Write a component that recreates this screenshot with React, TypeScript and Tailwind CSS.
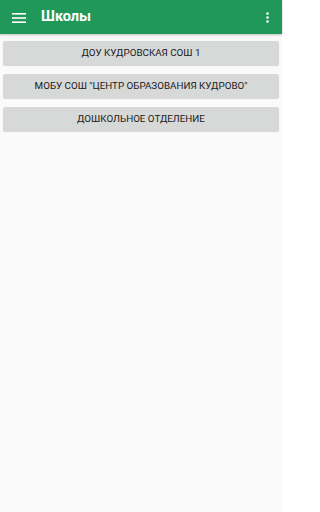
import { useState } from "react";

const schools = [
  "ДОУ Кудровская СОШ 1",
  'МОБУ СОШ "Центр образования Кудрово"',
  "Дошкольное отделение",
];

export default function App() {
  const [selected, setSelected] = useState<number | null>(null);

  return (
    <div className="flex min-h-[512px] w-[282px] flex-col bg-[#fafafa] font-['Roboto',sans-serif]">
      <header className="flex h-[34px] items-center bg-[#20985a] pl-3 pr-[13px] text-white shadow-[0_1px_2px_rgba(0,0,0,0.25)]">
        <svg width="14" height="10" viewBox="0 0 14 10" className="mt-px">
          <rect x="0" y="0" width="14" height="1.6" fill="white" />
          <rect x="0" y="4.2" width="14" height="1.6" fill="white" />
          <rect x="0" y="8.4" width="14" height="1.6" fill="white" />
        </svg>
        <h1 className="ml-[15px] text-[14.5px] font-bold leading-none">Школы</h1>
        <div className="flex-1" />
        <svg width="3" height="11" viewBox="0 0 3 11">
          <circle cx="1.5" cy="1.5" r="1.3" fill="white" />
          <circle cx="1.5" cy="5.5" r="1.3" fill="white" />
          <circle cx="1.5" cy="9.5" r="1.3" fill="white" />
        </svg>
      </header>

      <div className="flex flex-col gap-[9px] px-[3px] pt-[7px]">
        {schools.map((name, i) => (
          <button
            key={name}
            onClick={() => setSelected(i)}
            className={`h-6 w-full rounded-[2px] text-[9.8px] uppercase leading-none text-[#1a1a1a] shadow-[0_1px_1px_rgba(0,0,0,0.15)] ${
              selected === i ? "bg-[#c8c9c9]" : "bg-[#d7d8d8]"
            }`}
          >
            {name}
          </button>
        ))}
      </div>
    </div>
  );
}
